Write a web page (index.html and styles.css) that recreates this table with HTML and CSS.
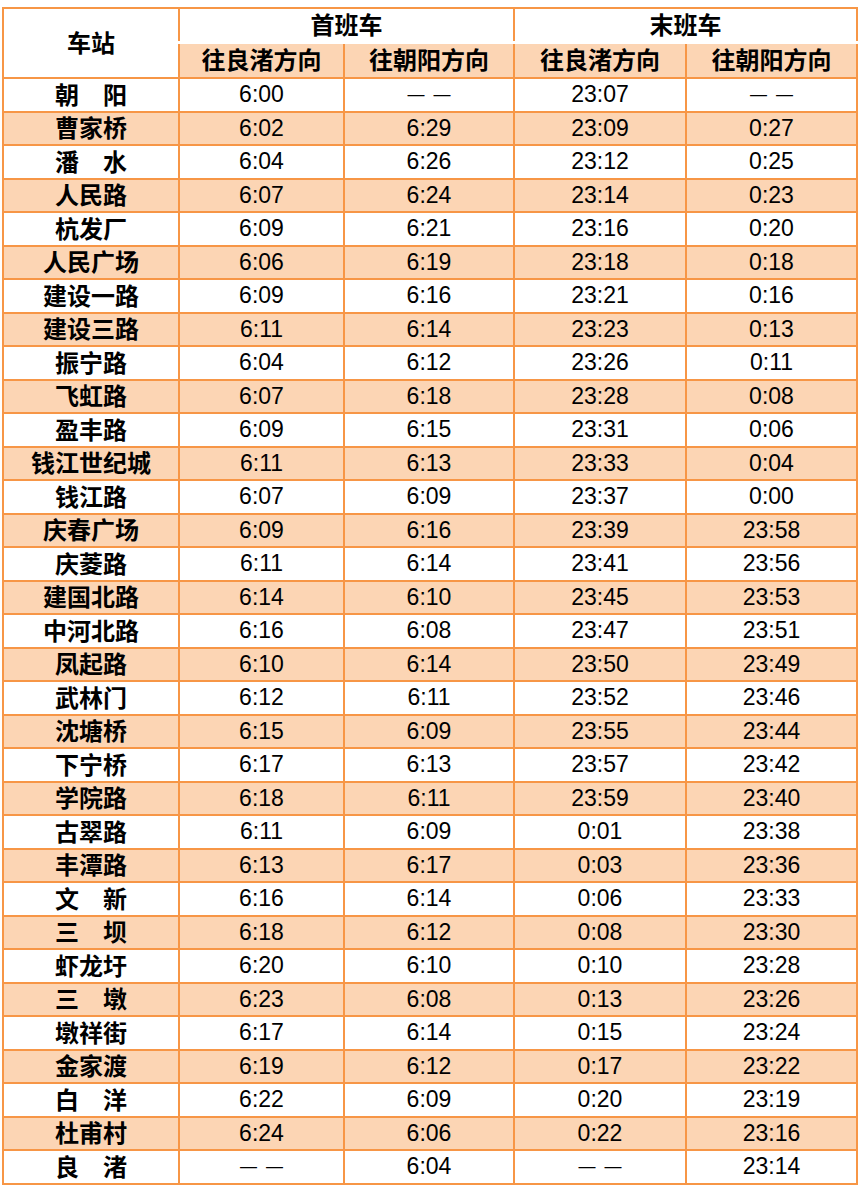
FILE: index.html
```html
<!DOCTYPE html>
<html lang="zh-CN">
<head>
<meta charset="utf-8">
<title>首末班车时刻表</title>
<link rel="stylesheet" href="styles.css">
</head>
<body>
<table class="timetable">
  <colgroup>
    <col class="c-st"><col class="c-1"><col class="c-2"><col class="c-3"><col class="c-4">
  </colgroup>
  <thead>
    <tr class="h1">
      <th rowspan="2" class="st-head">车站</th>
      <th colspan="2" class="grp">首班车</th>
      <th colspan="2" class="grp">末班车</th>
    </tr>
    <tr class="h2">
      <th>往良渚方向</th><th>往朝阳方向</th><th>往良渚方向</th><th>往朝阳方向</th>
    </tr>
  </thead>
  <tbody>
    <tr><td class="st">朝　阳</td><td>6:00</td><td class="dash">——</td><td>23:07</td><td class="dash">——</td></tr>
    <tr class="alt"><td class="st">曹家桥</td><td>6:02</td><td>6:29</td><td>23:09</td><td>0:27</td></tr>
    <tr><td class="st">潘　水</td><td>6:04</td><td>6:26</td><td>23:12</td><td>0:25</td></tr>
    <tr class="alt"><td class="st">人民路</td><td>6:07</td><td>6:24</td><td>23:14</td><td>0:23</td></tr>
    <tr><td class="st">杭发厂</td><td>6:09</td><td>6:21</td><td>23:16</td><td>0:20</td></tr>
    <tr class="alt"><td class="st">人民广场</td><td>6:06</td><td>6:19</td><td>23:18</td><td>0:18</td></tr>
    <tr><td class="st">建设一路</td><td>6:09</td><td>6:16</td><td>23:21</td><td>0:16</td></tr>
    <tr class="alt"><td class="st">建设三路</td><td>6:11</td><td>6:14</td><td>23:23</td><td>0:13</td></tr>
    <tr><td class="st">振宁路</td><td>6:04</td><td>6:12</td><td>23:26</td><td>0:11</td></tr>
    <tr class="alt"><td class="st">飞虹路</td><td>6:07</td><td>6:18</td><td>23:28</td><td>0:08</td></tr>
    <tr><td class="st">盈丰路</td><td>6:09</td><td>6:15</td><td>23:31</td><td>0:06</td></tr>
    <tr class="alt"><td class="st">钱江世纪城</td><td>6:11</td><td>6:13</td><td>23:33</td><td>0:04</td></tr>
    <tr><td class="st">钱江路</td><td>6:07</td><td>6:09</td><td>23:37</td><td>0:00</td></tr>
    <tr class="alt"><td class="st">庆春广场</td><td>6:09</td><td>6:16</td><td>23:39</td><td>23:58</td></tr>
    <tr><td class="st">庆菱路</td><td>6:11</td><td>6:14</td><td>23:41</td><td>23:56</td></tr>
    <tr class="alt"><td class="st">建国北路</td><td>6:14</td><td>6:10</td><td>23:45</td><td>23:53</td></tr>
    <tr><td class="st">中河北路</td><td>6:16</td><td>6:08</td><td>23:47</td><td>23:51</td></tr>
    <tr class="alt"><td class="st">凤起路</td><td>6:10</td><td>6:14</td><td>23:50</td><td>23:49</td></tr>
    <tr><td class="st">武林门</td><td>6:12</td><td>6:11</td><td>23:52</td><td>23:46</td></tr>
    <tr class="alt"><td class="st">沈塘桥</td><td>6:15</td><td>6:09</td><td>23:55</td><td>23:44</td></tr>
    <tr><td class="st">下宁桥</td><td>6:17</td><td>6:13</td><td>23:57</td><td>23:42</td></tr>
    <tr class="alt"><td class="st">学院路</td><td>6:18</td><td>6:11</td><td>23:59</td><td>23:40</td></tr>
    <tr><td class="st">古翠路</td><td>6:11</td><td>6:09</td><td>0:01</td><td>23:38</td></tr>
    <tr class="alt"><td class="st">丰潭路</td><td>6:13</td><td>6:17</td><td>0:03</td><td>23:36</td></tr>
    <tr><td class="st">文　新</td><td>6:16</td><td>6:14</td><td>0:06</td><td>23:33</td></tr>
    <tr class="alt"><td class="st">三　坝</td><td>6:18</td><td>6:12</td><td>0:08</td><td>23:30</td></tr>
    <tr><td class="st">虾龙圩</td><td>6:20</td><td>6:10</td><td>0:10</td><td>23:28</td></tr>
    <tr class="alt"><td class="st">三　墩</td><td>6:23</td><td>6:08</td><td>0:13</td><td>23:26</td></tr>
    <tr><td class="st">墩祥街</td><td>6:17</td><td>6:14</td><td>0:15</td><td>23:24</td></tr>
    <tr class="alt"><td class="st">金家渡</td><td>6:19</td><td>6:12</td><td>0:17</td><td>23:22</td></tr>
    <tr><td class="st">白　洋</td><td>6:22</td><td>6:09</td><td>0:20</td><td>23:19</td></tr>
    <tr class="alt"><td class="st">杜甫村</td><td>6:24</td><td>6:06</td><td>0:22</td><td>23:16</td></tr>
    <tr><td class="st">良　渚</td><td class="dash">——</td><td>6:04</td><td class="dash">——</td><td>23:14</td></tr>
  </tbody>
</table>
</body>
</html>
```

FILE: styles.css
```css
html, body {
  margin: 0;
  padding: 0;
  background: #ffffff;
}

body {
  padding: 7px 0 0 2px;
}

.timetable {
  border-collapse: collapse;
  table-layout: fixed;
  width: 856px;
  color: #000;
  font-family: "Liberation Sans", Arial, "Noto Sans CJK SC", sans-serif;
  font-size: 23px;
}

.c-st { width: 176px; }
.c-1 { width: 165px; }
.c-2 { width: 170px; }
.c-3 { width: 172px; }
.c-4 { width: 171px; }

.timetable th,
.timetable td {
  border: 2px solid #f79646;
  padding: 0;
  text-align: center;
  vertical-align: middle;
  white-space: nowrap;
  line-height: 1;
}

.timetable th {
  font-family: "Noto Sans CJK SC", sans-serif;
  font-weight: 700;
  font-size: 24px;
  padding-bottom: 3px;
}

.h1 th { height: 29px; }
.h2 th { height: 30px; background: #fcd5b4; }
.h1 th.st-head { background: #ffffff; }
.h1 th.grp { border-bottom: 3px solid #ffffff; }

.timetable td { height: 31.5px; }

.timetable td.st {
  font-family: "Noto Sans CJK SC", sans-serif;
  font-weight: 700;
  font-size: 24px;
  height: 29.5px;
  padding-bottom: 2px;
}

.timetable tr.alt td { background: #fcd5b4; }

.timetable td.dash {
  font-family: "Liberation Sans", sans-serif;
  font-size: 17px;
  letter-spacing: 9px;
  padding-left: 9px;
}
```
